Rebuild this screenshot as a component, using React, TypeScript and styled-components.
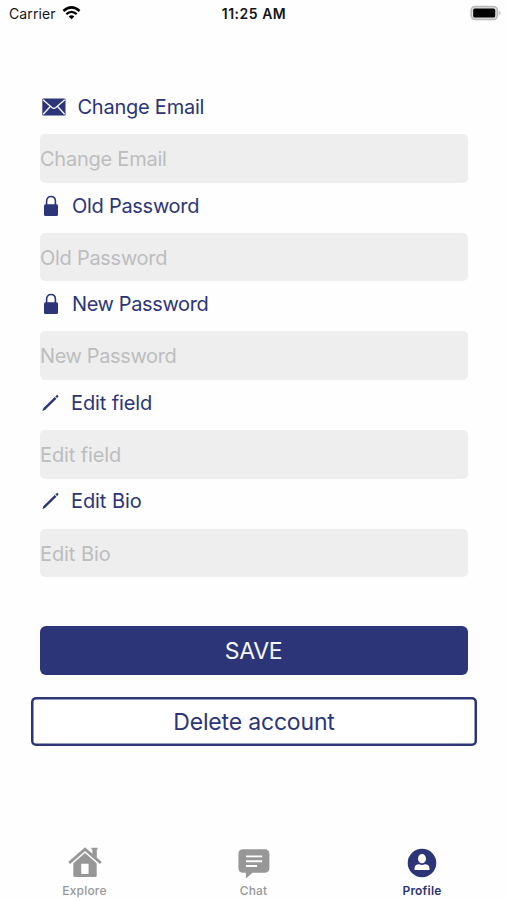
import React from "react";
import styled, { createGlobalStyle } from "styled-components";

const NAVY = "#2c3578";
const GREY = "#979797";

const GlobalStyle = createGlobalStyle`
  * { box-sizing: border-box; }
  body { margin: 0; background: #fefefe; }
`;

const Screen = styled.div`
  width: 507px;
  height: 900px;
  display: flex;
  flex-direction: column;
  overflow: hidden;
  background: #fefefe;
  font-family: Inter, "Liberation Sans", sans-serif;
`;

const StatusBar = styled.header`
  height: 28px;
  flex: none;
  display: grid;
  grid-template-columns: 1fr auto 1fr;
  align-items: center;
  padding: 0 6px 0 9px;
  color: #151515;
  font-size: 14px;
  line-height: 28px;
`;

const Carrier = styled.div`
  display: flex;
  align-items: center;
  gap: 6px;
  letter-spacing: 0.12px;
  svg { margin-top: -2px; }
`;

const Clock = styled.div`
  font-weight: 600;
  font-size: 14px;
  letter-spacing: 0.52px;
  margin-right: 2px;
`;

const BatterySlot = styled.div`
  display: flex;
  justify-content: flex-end;
  svg { margin-top: -2px; }
`;

const Form = styled.form`
  flex: 1;
  display: flex;
  flex-direction: column;
  padding: 56px 39px 0 40px;
`;

const Field = styled.div`
  height: 98.65px;
  flex: none;
  display: flex;
  flex-direction: column;
`;

const Label = styled.label<{ $gap: number }>`
  flex: 1;
  display: flex;
  align-items: center;
  gap: ${(p) => p.$gap}px;
  padding: 0 0 4.2px 2px;
  color: ${NAVY};
  font-size: 20px;
  line-height: 24px;
  svg { flex: none; }
`;

const LabelText = styled.span<{ $spacing: number }>`
  letter-spacing: ${(p) => p.$spacing}px;
`;

const Input = styled.input<{ $spacing: number }>`
  height: 48.7px;
  flex: none;
  width: 100%;
  border: 0;
  border-radius: 5px;
  padding: 1.4px 0 0;
  outline: none;
  background: #eeeeee;
  color: ${NAVY};
  font-family: inherit;
  font-size: 20px;
  letter-spacing: ${(p) => p.$spacing}px;
  &::placeholder { color: #bdbdbf; opacity: 1; }
`;

const SaveButton = styled.button`
  height: 49px;
  flex: none;
  margin-top: 48.7px;
  border: 0;
  border-radius: 6px;
  background: ${NAVY};
  color: #f6f7ff;
  font-family: inherit;
  font-size: 23px;
  letter-spacing: -0.3px;
  padding: 2px 1px 0 0;
`;

const DeleteButton = styled.button`
  height: 49px;
  flex: none;
  margin: 22px -9px 0;
  border: 0;
  box-shadow: inset 0 0 0 2.5px ${NAVY};
  border-radius: 5px;
  background: #ffffff;
  color: ${NAVY};
  font-family: inherit;
  font-size: 23px;
  letter-spacing: -0.18px;
  padding: 2px 0 0;
`;

const TabBar = styled.nav`
  height: 60px;
  flex: none;
  display: grid;
  grid-template-columns: repeat(3, 1fr);
`;

const Tab = styled.div<{ $active?: boolean }>`
  display: flex;
  flex-direction: column;
  align-items: center;
  gap: 4px;
  padding: 5px ${(p) => (p.$active ? 1 : 0)}px 0 0;
  color: ${(p) => (p.$active ? NAVY : GREY)};
  font-size: 12px;
  line-height: 16px;
  font-weight: ${(p) => (p.$active ? 600 : 500)};
  letter-spacing: 0.2px;
`;

const WifiIcon = () => (
  <svg width="19" height="14" viewBox="0 0 19 14" fill="none" stroke="#000">
    <path d="M1.4 5Q9.5-2.2 17.6 5" strokeWidth="2.5" />
    <path d="M4.3 8.2Q9.5 3.6 14.7 8.2" strokeWidth="2.3" />
    <path d="M6.7 10.4Q9.5 8.2 12.3 10.4L9.5 13.3Z" fill="#000" stroke="none" />
  </svg>
);

const BatteryIcon = () => (
  <svg width="31" height="16" viewBox="0 0 31 16">
    <rect x="1.2" y="1.5" width="26.2" height="13" rx="4" fill="#ddd" stroke="#b8b8b8" strokeWidth="1.6" />
    <rect x="3.2" y="3.6" width="22" height="8.9" rx="1.6" fill="#000" />
    <path d="M28.8 5.8Q30.8 6.5 30.8 8T28.8 10.2Z" fill="#c4c4c4" />
  </svg>
);

const MailIcon = () => (
  <svg width="24" height="18" viewBox="0 0 24 18">
    <rect x="0.3" y="0.4" width="23.2" height="17.2" rx="1.3" fill={NAVY} />
    <path d="M1 1.8L10.2 9.8Q11.9 11.1 13.6 9.8L22.8 1.8M1.2 16.2L8.2 8.5M22.6 16.2L15.6 8.5" fill="none" stroke="#f4f5ff" strokeWidth="1.4" />
  </svg>
);

const LockIcon = () => (
  <svg width="18" height="22" viewBox="0 0 18 22">
    <path d="M4.6 10V6.2C4.6 3.2 6.5 1.5 9 1.5s4.4 1.7 4.4 4.7V10" fill="none" stroke={NAVY} strokeWidth="1.6" />
    <rect x="2" y="9.3" width="14" height="11.7" rx="1.5" fill={NAVY} />
  </svg>
);

const PencilIcon = () => (
  <svg width="18" height="18" viewBox="0 0 18 18" fill={NAVY}>
    <path d="M12.7 2.9L14.5 4.7L3.2 15.8L0.3 17.3L1.5 14.1Z" />
    <path d="M13.3 2.4L14.6 1.2Q15.2.7 15.9 1.3T16.3 2.7L15.1 4Z" />
  </svg>
);

const HouseIcon = () => (
  <svg width="34" height="34" viewBox="0 0 34 34">
    <path d="M23.4 2.8H29.6V4.4H28.8V13L24.4 9V4.4H23.4Z" fill={GREY} />
    <path d="M1.2 18L17 4.2L32.8 18" fill="none" stroke={GREY} strokeWidth="2.9" />
    <path d="M17 7.9L28.7 18.2V30.6Q28.7 32.1 27.2 32.1H6.8Q5.3 32.1 5.3 30.6V18.2ZM13.2 18.8V29H20.6V18.8Z" fill={GREY} fillRule="evenodd" />
  </svg>
);

const ChatIcon = () => (
  <svg width="34" height="34" viewBox="0 0 34 34">
    <path d="M6.2 4.2H27.5Q32.4 4.2 32.4 9V23Q32.4 27.8 27.5 27.8H15.5L8.9 33.5V27.8H6.2Q1.4 27.8 1.4 23V9Q1.4 4.2 6.2 4.2Z" fill={GREY} />
    <path d="M9 11.4H25.2M9 16.2H25.2M9 21H20" fill="none" stroke="#fff" strokeWidth="1.9" />
  </svg>
);

const ProfileIcon = () => (
  <svg width="34" height="34" viewBox="0 0 34 34">
    <circle cx="17" cy="18" r="14.3" fill={NAVY} />
    <ellipse cx="17" cy="13.7" rx="4" ry="4.6" fill="#fff" />
    <path d="M9.5 25V23.4Q9.7 19.3 14.2 19.3Q17 20.5 19.8 19.3Q24.3 19.3 24.5 23.4V25Z" fill="#fff" />
  </svg>
);

const fields = [
  { text: "Change Email", icon: <MailIcon />, gap: 11.5, spacing: -0.24 },
  { text: "Old Password", icon: <LockIcon />, gap: 12, spacing: -0.28 },
  { text: "New Password", icon: <LockIcon />, gap: 12, spacing: -0.38 },
  { text: "Edit field", icon: <PencilIcon />, gap: 11, spacing: -0.12 },
  { text: "Edit Bio", icon: <PencilIcon />, gap: 11, spacing: -0.08 },
];

export default function App() {
  return (
    <Screen>
      <GlobalStyle />
      <StatusBar>
        <Carrier>Carrier <WifiIcon /></Carrier>
        <Clock>11:25 AM</Clock>
        <BatterySlot><BatteryIcon /></BatterySlot>
      </StatusBar>
      <Form onSubmit={(e) => e.preventDefault()}>
        {fields.map((f, i) => (
          <Field key={f.text}>
            <Label htmlFor={`field-${i}`} $gap={f.gap}>
              {f.icon}
              <LabelText $spacing={f.spacing}>{f.text}</LabelText>
            </Label>
            <Input id={`field-${i}`} placeholder={f.text} $spacing={f.spacing} />
          </Field>
        ))}
        <SaveButton type="submit">SAVE</SaveButton>
        <DeleteButton type="button">Delete account</DeleteButton>
      </Form>
      <TabBar>
        <Tab><HouseIcon />Explore</Tab>
        <Tab><ChatIcon />Chat</Tab>
        <Tab $active><ProfileIcon />Profile</Tab>
      </TabBar>
    </Screen>
  );
}
